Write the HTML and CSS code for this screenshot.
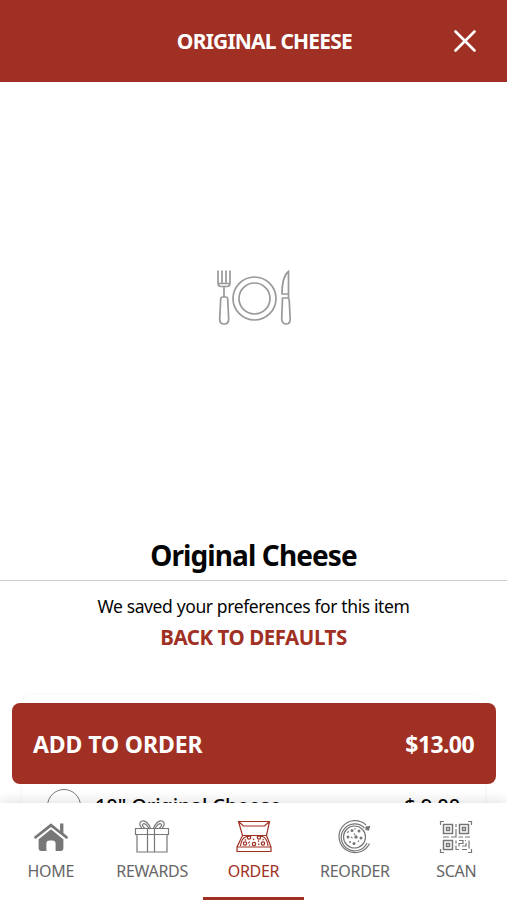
FILE: index.html
```
<!DOCTYPE html>
<html lang="en">
<head>
    <meta charset="UTF-8">
    <meta name="viewport" content="width=device-width, initial-scale=1.0">
    <title>Original Cheese</title>
    <link rel="stylesheet" href="styles.css">
</head>
<body>
<div class="app">
    <header class="header">
        <h1 class="header-title">ORIGINAL CHEESE</h1>
        <button class="close-btn" aria-label="Close">
            <svg width="22" height="22" viewBox="0 0 22 22"><path d="M1.5 1.5l19 19M20.5 1.5l-19 19"/></svg>
        </button>
    </header>

    <main class="content">
        <div class="item-image">
            <svg class="plate-icon" width="76" height="56" viewBox="0 0 76 56">
                <circle cx="38.5" cy="28.5" r="21.5"/>
                <circle cx="38.5" cy="28.5" r="15.5"/>
                <path d="M2 .5v12q0 4 3 4h6q3 0 3-4v-12M6 .5v12.500M10 .5v12.500M2 13.500h12M8 17v10"/>
                <path d="M6.500 27h3.500q1.500 0 1.700 2l1 20q0 5-4.500 5t-4.500-5l1-20q.2-2 1.800-2z"/>
                <path d="M72.500 1.500c-4 3-6.500 12-6.500 22.500h6.500zM67 28h5q1 0 1.200 2l1 19q0 5-4 5t-4.500-5l.8-21zM72.500 24v4"/>
            </svg>
        </div>
        <h2 class="item-name">Original Cheese</h2>
        <div class="preferences">
            <p class="saved-text">We saved your preferences for this item</p>
            <a class="defaults-link">BACK TO DEFAULTS</a>
        </div>
        <div class="size-card">
            <div class="size-option">
                <span class="radio"></span>
                <span class="size-name">10" Original Cheese</span>
                <span class="size-price">$ 9.00</span>
            </div>
        </div>
    </main>

    <button class="add-btn">
        <span class="add-label">ADD TO ORDER</span>
        <span class="add-price">$13.00</span>
    </button>

    <nav class="tabs">
        <a class="tab">
            <svg width="36" height="36" viewBox="0 0 36 36">
                <path class="solid" d="M18 9.500L5 20v9.500q0 3 3 3h6v-8q0-2.500 2.500-2.500h3q2.500 0 2.500 2.500v8h6q3 0 3-3V20z"/>
                <path class="solid" d="M18 3.500L1 17q-1 1.300 0 2.600t2.500.4L18 8.800 32.500 20q1.500.9 2.500-.4t0-2.600L31 13.700V4h-4.500v6.500z"/>
            </svg>
            <span>HOME</span>
        </a>
        <a class="tab">
            <svg width="36" height="36" viewBox="0 0 36 36">
                <path d="M1.500 9.500h33v6h-33zM3 15.500v17.500h30V15.500M13.500 9.500v23.500M20.500 9.500v23.500M13.500 15.500h7"/>
                <path d="M16.500 9.500C15 4.500 11 1 8 2S5 6.500 8 9.500M19.500 9.500C21 4.500 25 1 28 2s3 4.500 0 7.500M15 9.500C13 6 10.500 4 9 5s0 3 2 4.500M21 9.500c2-3.500 4.500-5.500 6-4.500s0 3-2 4.500"/>
            </svg>
            <span>REWARDS</span>
        </a>
        <a class="tab active">
            <svg width="36" height="36" viewBox="0 0 36 36">
                <path d="M2.500 2.500h31l-3 14h-24zM2.500 2.500l5 4.500h21l5-4.500M6.500 16.500L1 28v4.500h34V28L30.500 16.500M1 28h34"/>
                <path d="M4.500 27c.5-5 3-8.500 6-9.500q8-2 16 0c3 1 5 4.500 5.500 9.500"/>
                <circle cx="13" cy="18.500" r="1.700"/><circle cx="23" cy="18.500" r="1.700"/>
                <circle cx="9" cy="24.500" r="1.700"/><circle cx="18" cy="25" r="1.700"/><circle cx="27" cy="24.500" r="1.700"/>
                <path d="M9 20.500l1 1M17 19.500l1 1.500M13.500 22.500l-1 2M22 22.500l1-1M28 20.500l-1.500.5M14 26.500l-1-.5M22.500 26l.5-1.500"/>
            </svg>
            <span>ORDER</span>
        </a>
        <a class="tab">
            <svg width="36" height="36" viewBox="0 0 36 36">
                <path d="M29 6A16 16 0 1 0 32.500 24.500M27.500 9A13.500 13.500 0 1 0 30 24"/>
                <path class="arrow" d="M29 8l3.500-.5-1 3.500-2.500-.5z"/>
                <circle cx="17.500" cy="18" r="11"/>
                <g class="dots">
                    <circle cx="15" cy="11.500" r="1.500"/><circle cx="22" cy="12" r="1.500"/>
                    <circle cx="11" cy="18" r="1.500"/><circle cx="19" cy="18" r="1.700"/>
                    <circle cx="24" cy="19" r="1.500"/><circle cx="17" cy="24.500" r="1.500"/>
                    <circle cx="13" cy="23" r="1"/>
                </g>
                <path d="M10.500 14l1-2M17 14.500l1 1.500M14 18l1.500 1M21 23l1-1.500M18 9v1.500"/>
            </svg>
            <span>REORDER</span>
        </a>
        <a class="tab">
            <svg width="36" height="36" viewBox="0 0 36 36">
                <path d="M2.500 6V2.500H6M30 2.500h3.500V6M2.500 30v3.500H6M30 33.500h3.500V30"/>
                <path class="bold" d="M5.500 5.500h9v9h-9zM8.500 8.500h3v3h-3zM21.500 5.500h9v9h-9zM24.500 8.500h3v3h-3zM5.500 21.500h9v9h-9zM8.500 24.500h3v3h-3z"/>
                <path d="M18 5v3M18 10v8h-5M5 18h6M20.500 18H25M27 18h5M18 21.500v3M18 26.500v4h3M21 21.500h4v3h-4v3M31 21.500v8M28 24v3h-4M24 30.500h5M28 21.500h-1"/>
            </svg>
            <span>SCAN</span>
        </a>
    </nav>
</div>
</body>
</html>
```
FILE: styles.css
```
* {
    box-sizing: border-box;
}

body {
    margin: 0;
    font-family: "Noto Sans", "Open Sans", sans-serif;
    background-color: #fff;
    color: #050505;
}

h1, h2, p {
    margin: 0;
}

button {
    border: none;
    padding: 0;
    font-family: inherit;
    color: #fff;
    cursor: pointer;
}

svg {
    display: block;
    fill: none;
    stroke: #777;
    stroke-width: 1.2;
}

.app {
    position: relative;
    display: flex;
    flex-direction: column;
    height: 900px;
    overflow: hidden;
}

.header {
    display: flex;
    align-items: center;
    justify-content: flex-end;
    height: 82px;
    padding-right: 31px;
    background-color: #a03023;
    color: #fff;
}

.header-title {
    margin-right: 102px;
    font-size: 21px;
    letter-spacing: -0.8px;
    line-height: 30px;
    white-space: nowrap;
}

.close-btn {
    background: none;
}

.close-btn svg {
    stroke: #fff;
    stroke-width: 2.6;
    stroke-linecap: round;
}

.content {
    flex: 1;
    min-height: 0;
    overflow: hidden;
}

.item-image {
    display: flex;
    align-items: center;
    justify-content: center;
    height: 432px;
}

.plate-icon {
    stroke: #999;
    stroke-width: 1.7;
}

.item-name {
    height: 67px;
    padding-top: 22px;
    border-bottom: 1px solid #ccc;
    font-size: 28px;
    letter-spacing: -0.9px;
    line-height: 38px;
    text-align: center;
}

.preferences {
    display: flex;
    flex-direction: column;
    align-items: center;
    height: 114px;
    padding-top: 9px;
}

.saved-text {
    font-size: 17.5px;
    letter-spacing: -0.38px;
    line-height: 32px;
}

.defaults-link {
    color: #a03023;
    font-size: 20.5px;
    font-weight: 700;
    letter-spacing: -0.45px;
    line-height: 31px;
}

.size-card {
    height: 160px;
    margin: 0 22px;
    padding: 94px 25px 0;
    border-radius: 10px;
    box-shadow: 0 0 4px rgba(0, 0, 0, 0.06);
}

.size-option {
    display: flex;
    align-items: center;
    height: 34px;
}

.radio {
    width: 34px;
    height: 34px;
    margin-right: 14px;
    border: 1px solid #777;
    border-radius: 50%;
}

.size-name, .size-price {
    padding-bottom: 1px;
    font-size: 20px;
    font-weight: 500;
    letter-spacing: -0.1px;
}

.size-price {
    margin-left: auto;
}

.add-btn {
    position: absolute;
    top: 703px;
    left: 12px;
    right: 11px;
    display: flex;
    align-items: center;
    justify-content: space-between;
    height: 81px;
    padding: 0 22px 0 21px;
    border-radius: 8px;
    background-color: #a03023;
    font-size: 23px;
    font-weight: 700;
}

.add-label {
    letter-spacing: -0.1px;
}

.add-price {
    letter-spacing: -0.6px;
}

.tabs {
    position: relative;
    display: flex;
    height: 97px;
    background-color: #fff;
    box-shadow: 0 -2px 12px rgba(0, 0, 0, 0.12);
}

.tab {
    display: flex;
    flex: 1;
    flex-direction: column;
    align-items: center;
    padding-top: 16px;
    border-bottom: 3px solid transparent;
    color: #666;
    font-size: 16px;
    letter-spacing: -0.3px;
    line-height: 24px;
}

.tab svg {
    margin-bottom: 4px;
}

.tab.active {
    border-bottom-color: #a03023;
    color: #a03023;
}

.tab.active svg {
    stroke: #a03023;
}

.solid {
    fill: #777;
    stroke: #fff;
}

.bold {
    stroke-width: 1.5;
}

.dots, .arrow {
    fill: #777;
}

.dots {
    stroke: none;
}
```
